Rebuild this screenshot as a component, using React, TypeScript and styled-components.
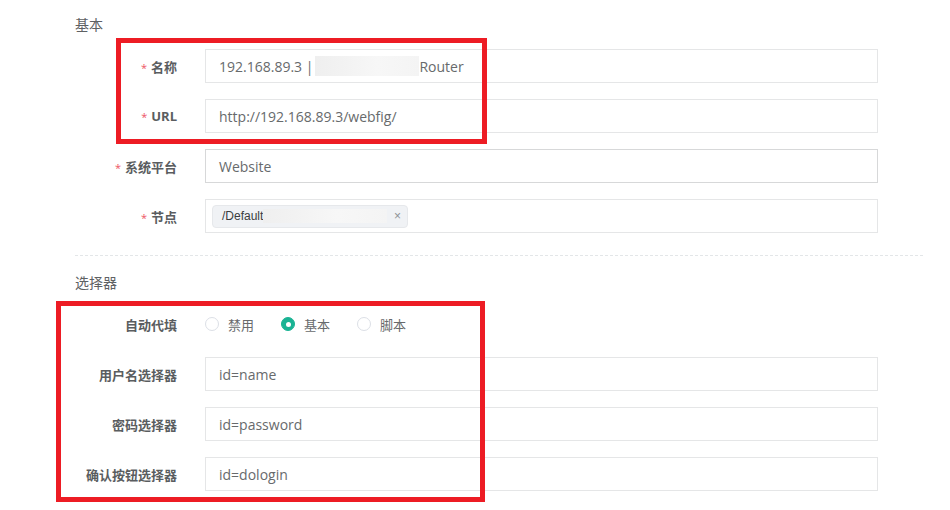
import React from "react";
import styled, { createGlobalStyle } from "styled-components";

const Global = createGlobalStyle`
  html, body { margin: 0; padding: 0; background: #fff; }
  body { font-family: "Open Sans", "Noto Sans CJK SC", sans-serif; color: #676a6c; }
  * { box-sizing: border-box; }
`;

const Page = styled.div`
  position: relative;
  width: 950px;
  height: 510px;
  overflow: hidden;
  padding-left: 75px;
`;

const Form = styled.div`
  width: 848px;
  display: flex;
  flex-direction: column;
`;

const SectionTitle = styled.div<{ $top: number }>`
  margin-top: ${(p) => p.$top}px;
  height: 20px;
  line-height: 20px;
  font-size: 14px;
  font-family: "Noto Sans CJK SC", sans-serif;
  color: #5e6163;
  margin-bottom: 15px;
`;

const Rows = styled.div`
  display: flex;
  flex-direction: column;
  gap: 16px;
`;

const Row = styled.div`
  display: grid;
  grid-template-columns: 102px 673px;
  column-gap: 28px;
  align-items: center;
  height: 34px;
`;

const Label = styled.label`
  text-align: right;
  font-size: 13px;
  font-weight: 700;
  font-family: "Open Sans", "Noto Sans CJK SC", sans-serif;
  color: #5a5d60;
  white-space: nowrap;
`;

const Star = styled.span`
  color: #ed5565;
  font-weight: 400;
  margin-right: 4px;
  font-size: 11px;
`;

const Input = styled.div<{ $dark?: boolean }>`
  height: 34px;
  border: 1px solid ${(p) => (p.$dark ? "#d7d8d9" : "#e5e6e7")};
  background: #fff;
  display: flex;
  align-items: center;
  padding-left: 13px;
  font-size: 14px;
  color: #676a6c;
  font-family: "Open Sans", "Noto Sans CJK SC", sans-serif;
  white-space: pre;
`;

const Redact = styled.span<{ $w: number; $h?: number }>`
  display: inline-block;
  width: ${(p) => p.$w}px;
  height: ${(p) => p.$h ?? 20}px;
  background: linear-gradient(90deg, #efefef 0%, #f2f2f2 25%, #f7f7f7 60%, #f4f4f4 100%);
`;

const TagBox = styled.div`
  height: 34px;
  border: 1px solid #e5e6e7;
  display: flex;
  align-items: center;
  padding-left: 6px;
`;

const Tag = styled.span`
  display: inline-flex;
  align-items: center;
  height: 23px;
  width: 196px;
  padding: 0 6px 0 9px;
  background: #f0f2f5;
  border: 1px solid #e6e8eb;
  border-radius: 4px;
  font-family: "Liberation Sans", Arial, sans-serif;
  font-size: 12px;
  color: #3a3d40;
`;

const TagClose = styled.span`
  margin-left: auto;
  color: #8e9196;
  font-size: 12px;
`;

const Divider = styled.div`
  margin-top: 22px;
  border-top: 1px dashed #e3e6e8;
  height: 0;
`;

const Radios = styled.div`
  display: flex;
  align-items: center;
  gap: 27px;
`;

const RadioItem = styled.span`
  display: inline-flex;
  align-items: center;
  gap: 9px;
  font-size: 13px;
  font-family: "Noto Sans CJK SC", sans-serif;
  color: #676a6c;
`;

const RadioCircle = styled.span<{ $on?: boolean }>`
  width: 14px;
  height: 14px;
  border-radius: 50%;
  border: 1px solid ${(p) => (p.$on ? "#1ab394" : "#dcdfe6")};
  background: ${(p) => (p.$on ? "#1ab394" : "#fff")};
  display: inline-flex;
  align-items: center;
  justify-content: center;
  &::after {
    content: "";
    width: 5px;
    height: 5px;
    border-radius: 50%;
    background: #fff;
    display: ${(p) => (p.$on ? "block" : "none")};
  }
`;

const Highlight = styled.div<{ $l: number; $t: number; $w: number; $h: number }>`
  position: absolute;
  left: ${(p) => p.$l}px;
  top: ${(p) => p.$t}px;
  width: ${(p) => p.$w}px;
  height: ${(p) => p.$h}px;
  border: 5px solid #ed1c24;
  pointer-events: none;
`;

export default function App() {
  return (
    <>
      <Global />
      <Page>
        <Form>
          <SectionTitle $top={14}>基本</SectionTitle>
          <Rows>
            <Row>
              <Label><Star>*</Star>名称</Label>
              <Input>
                192.168.89.3 |<Redact $w={104} style={{ marginLeft: 2 }} />Router
              </Input>
            </Row>
            <Row>
              <Label><Star>*</Star>URL</Label>
              <Input>http://192.168.89.3/webfig/</Input>
            </Row>
            <Row>
              <Label><Star>*</Star>系统平台</Label>
              <Input $dark>Website</Input>
            </Row>
            <Row>
              <Label><Star>*</Star>节点</Label>
              <TagBox>
                <Tag>
                  /Default
                  <Redact $w={124} $h={14} />
                  <TagClose>×</TagClose>
                </Tag>
              </TagBox>
            </Row>
          </Rows>
          <Divider />
          <SectionTitle $top={16}>选择器</SectionTitle>
          <Rows>
            <Row>
              <Label>自动代填</Label>
              <Radios>
                <RadioItem><RadioCircle />禁用</RadioItem>
                <RadioItem><RadioCircle $on />基本</RadioItem>
                <RadioItem><RadioCircle />脚本</RadioItem>
              </Radios>
            </Row>
            <Row>
              <Label>用户名选择器</Label>
              <Input>id=name</Input>
            </Row>
            <Row>
              <Label>密码选择器</Label>
              <Input>id=password</Input>
            </Row>
            <Row>
              <Label>确认按钮选择器</Label>
              <Input>id=dologin</Input>
            </Row>
          </Rows>
        </Form>
        <Highlight $l={116} $t={38} $w={371} $h={106} />
        <Highlight $l={56} $t={301} $w={429} $h={201} />
      </Page>
    </>
  );
}
